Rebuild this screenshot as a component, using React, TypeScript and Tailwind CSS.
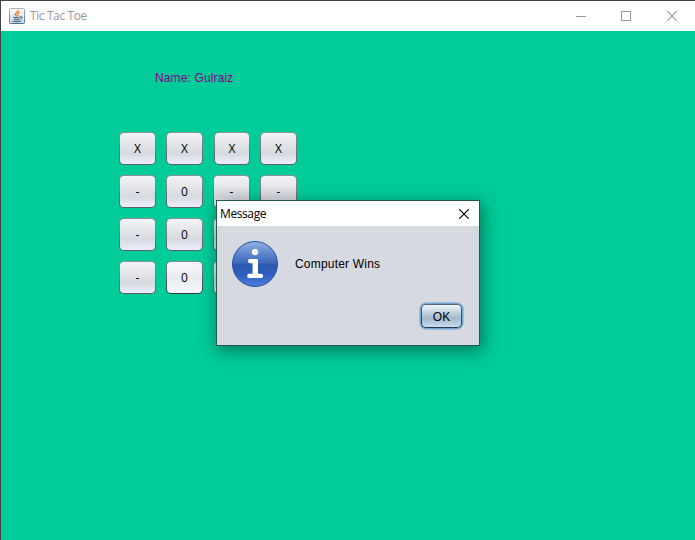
import React from "react";

type Cell = "X" | "0" | "-";

const board: Cell[][] = [
  ["X", "X", "X", "X"],
  ["-", "0", "-", "-"],
  ["-", "0", "-", "-"],
  ["-", "0", "-", "-"],
];

function JavaIcon() {
  return (
    <svg width="16" height="16" viewBox="0 0 16 16" className="shrink-0">
      <defs>
        <linearGradient id="java" x1="0" y1="0" x2="0" y2="1">
          <stop offset="0" stopColor="#fbfbfb" />
          <stop offset="1" stopColor="#d3d9de" />
        </linearGradient>
        <linearGradient id="javaEdge" x1="0" y1="0" x2="0" y2="1">
          <stop offset="0" stopColor="#a9b3bb" />
          <stop offset="1" stopColor="#4d7290" />
        </linearGradient>
      </defs>
      <rect x="0.5" y="0.5" width="15" height="15" rx="1" fill="url(#java)" stroke="url(#javaEdge)" />
      <path d="M9.4 2C9.8 3.9 6 4.6 6.3 6.3C6.4 7.2 7.3 7.8 7.7 8.6M10.6 4.4C8.8 5 8.1 5.7 8.7 6.6C9 7.2 8.9 7.6 8.5 8.2" fill="none" stroke="#e8822e" strokeWidth="1.4" />
      <path d="M4 9.2C5.5 9.9 9.5 9.8 11 9.2M5 11.2C6.6 11.8 9 11.7 10.2 11.2M11.2 8.5C13.9 8.3 13.2 10.5 11 11M3.3 13C5.6 14 10.2 13.9 12.4 12.8" fill="none" stroke="#4b7294" strokeWidth="1.2" />
    </svg>
  );
}

function CloseIcon({ className }: { className: string }) {
  return (
    <svg width="10" height="10" viewBox="0 0 10 10" className={className}>
      <path d="M0.2 0.2L9.8 9.8M9.8 0.2L0.2 9.8" fill="none" stroke="currentColor" strokeWidth="1.15" />
    </svg>
  );
}

function InfoIcon() {
  return (
    <svg width="48" height="48" viewBox="0 0 48 48">
      <defs>
        <linearGradient id="ball" x1="0" y1="0" x2="0" y2="1">
          <stop offset="0" stopColor="#96b2e2" />
          <stop offset="0.25" stopColor="#6288ce" />
          <stop offset="0.48" stopColor="#3d67bb" />
          <stop offset="0.52" stopColor="#2b57b0" />
          <stop offset="0.75" stopColor="#315fbd" />
          <stop offset="1" stopColor="#4f7edc" />
        </linearGradient>
      </defs>
      <circle cx="24" cy="24" r="22.5" fill="url(#ball)" stroke="#2450a3" strokeWidth="1" />
      <circle cx="24" cy="12.1" r="3.2" fill="#fff" />
      <path d="M18.6 19H25.6Q27 19 27 20.4V33.8H30.4Q32 33.8 32 36T30.4 38.1H17.7Q16.2 38.1 16.2 36T17.7 33.8H21.6V23.2H18.6Q17 23.2 17 21.1T18.6 19Z" fill="#fff" />
    </svg>
  );
}

function CellButton({ value, focused, narrow, shifted }: { value: Cell; focused: boolean; narrow: boolean; shifted: boolean }) {
  const width = narrow ? "w-[36px]" : "w-[37px]";
  const gap = shifted ? "ml-px" : "";
  const edge = focused
    ? "from-[#898c92] to-[#33363b]"
    : "from-[#8f9398] to-[#5b5e65]";
  const face = focused
    ? "from-[#fafafc] via-[#e8ebf2] to-[#f6f8fd]"
    : "from-[#f4f5f7] via-[#d6d9df] via-65% to-[#eceffa]";
  return (
    <button className={`block h-[33px] ${width} ${gap} rounded-[5px] bg-linear-to-b p-px ${edge}`}>
      <span className={`flex h-full items-center justify-center rounded-[4px] bg-linear-to-b pt-px text-[12px] leading-none text-black ${face}`}>
        {value}
      </span>
    </button>
  );
}

export default function App() {
  return (
    <div className="relative flex h-[540px] w-[695px] flex-col overflow-hidden border-t border-l border-[#444] bg-[#00cc99] font-['Open_Sans','Noto_Sans',sans-serif]">
      <header className="flex h-[30px] shrink-0 items-center bg-white pl-2 text-[#999]">
        <JavaIcon />
        <span className="ml-[5px] text-[12px] leading-4 tracking-[-0.4px]">Tic Tac Toe</span>
        <div className="ml-auto flex items-center pr-[18px]">
          <span className="h-px w-[10px] bg-[#999]" />
          <span className="ml-[35px] h-[10px] w-[10px] border border-[#999]" />
          <CloseIcon className="ml-[36px]" />
        </div>
      </header>

      <main className="pt-[39px] pl-[118px]">
        <p className="pl-9 font-['Liberation_Sans',Arial,sans-serif] text-[12px] leading-4 tracking-[0.13px] text-[#8b008b]">Name: Gulraiz</p>
        <div className="mt-[46px] flex flex-col gap-[10px]">
          {board.map((row, r) => (
            <div key={r} className="grid grid-cols-[37px_37px_37px_37px] gap-[10px]">
              {row.map((cell, c) => (
                <CellButton key={c} value={cell} focused={r === 3 && c === 1} narrow={r === 0 && c === 2} shifted={r === 0 && c === 2} />
              ))}
            </div>
          ))}
        </div>
      </main>

      <section className="absolute top-[199px] left-[215px] flex h-[146px] w-[264px] flex-col border border-[#24584c] bg-[#d6d9e0] shadow-[2px_4px_16px_1px_rgba(0,0,0,0.4)]">
        <header className="flex h-[25px] shrink-0 items-center justify-between bg-white pr-[10px] pl-[3px] text-black">
          <span className="text-[12px] leading-4 tracking-[-0.4px]">Message</span>
          <CloseIcon className="" />
        </header>
        <div className="flex items-center pt-[14px] pl-[14px]">
          <InfoIcon />
          <span className="ml-4 font-['Liberation_Sans',Arial,sans-serif] text-[12px] leading-4 tracking-[0.2px] text-black">Computer Wins</span>
        </div>
        <div className="flex justify-end pt-4 pr-[17px]">
          <button className="h-6 w-[41px] rounded-[5px] bg-linear-to-b from-[#53677e] to-[#24394f] p-px shadow-[0_0_0_1.5px_#73a4d1]">
            <span className="flex h-full items-center justify-center rounded-[4px] bg-linear-to-b from-[#f1f5f8] via-[#a3b8cb] via-60% to-[#c8dced] pt-px font-['Liberation_Sans',Arial,sans-serif] text-[12px] leading-none text-black">OK</span>
          </button>
        </div>
      </section>
    </div>
  );
}
